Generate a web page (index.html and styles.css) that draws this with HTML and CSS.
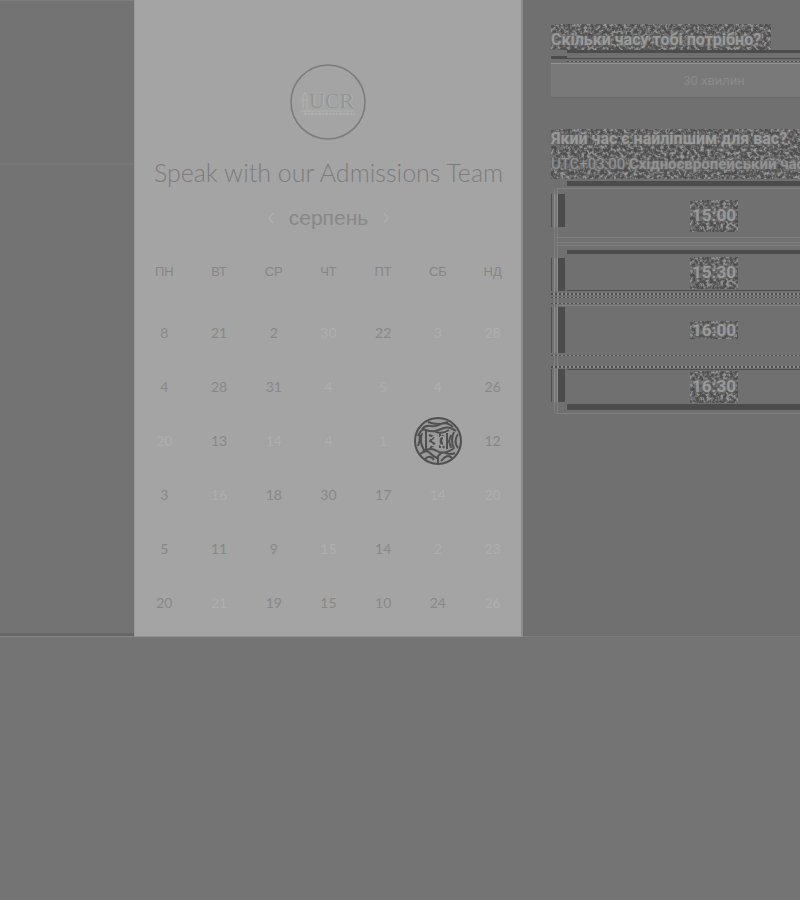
FILE: index.html
```html
<!DOCTYPE html>
<html lang="uk">
<head>
<meta charset="utf-8">
<meta name="viewport" content="width=device-width, initial-scale=1">
<title>Speak with our Admissions Team</title>
<link rel="stylesheet" href="styles.css">
</head>
<body>
<svg class="defs" aria-hidden="true">
  <filter id="grain" x="0" y="0" width="100%" height="100%" color-interpolation-filters="sRGB">
    <feTurbulence type="fractalNoise" baseFrequency="0.3" numOctaves="2" seed="7"/>
    <feColorMatrix values="1 0 0 0 0  1 0 0 0 0  1 0 0 0 0  0 0 0 0 1"/>
    <feComponentTransfer>
      <feFuncR type="discrete" tableValues="0.31 0.31 0.31 0.35 0.44 0.55 0.6 0.6"/>
      <feFuncG type="discrete" tableValues="0.31 0.31 0.31 0.35 0.44 0.55 0.6 0.6"/>
      <feFuncB type="discrete" tableValues="0.31 0.31 0.31 0.35 0.44 0.55 0.6 0.6"/>
    </feComponentTransfer>
  </filter>
</svg>
<main class="scheduler">
  <div class="gutter"></div>
  <section class="card">
    <svg class="logo" viewBox="0 0 78 78" role="img" aria-label="UCR">
      <circle cx="38" cy="39" r="37" fill="none" stroke="#7c7c7c" stroke-width="1.6"/>
      <g fill="none" stroke="#b0b0b0"><path d="M13 46V34l2-5 2 5v12M11 48h9M12 37h6"/><path d="M15 48h49" stroke="#afafaf"/></g>
      <text class="logo-shade" x="20" y="45">UCR</text>
      <text class="logo-text" x="19" y="45">UCR</text>
      <path d="M14 51h51" stroke="#b3b3b3" stroke-width="1.5" stroke-dasharray="3 1 2 1"/>
    </svg>
    <h1>Speak with our Admissions Team</h1>
    <div class="month">
      <button type="button" aria-label="Попередній місяць"><svg viewBox="0 0 8 12"><path d="M6 1 2 6l4 5"/></svg></button>
      <h2>серпень</h2>
      <button type="button" aria-label="Наступний місяць"><svg viewBox="0 0 8 12"><path d="m2 1 4 5-4 5"/></svg></button>
    </div>
    <table>
      <thead><tr><th>ПН</th><th>ВТ</th><th>СР</th><th>ЧТ</th><th>ПТ</th><th>СБ</th><th>НД</th></tr></thead>
      <tbody>
        <tr><td><button type="button">8</button></td><td><button type="button">21</button></td><td><button type="button">2</button></td><td class="off"><button type="button">30</button></td><td><button type="button">22</button></td><td class="off"><button type="button">3</button></td><td class="off"><button type="button">28</button></td></tr>
        <tr><td><button type="button">4</button></td><td><button type="button">28</button></td><td><button type="button">31</button></td><td class="off"><button type="button">4</button></td><td class="off"><button type="button">5</button></td><td class="off"><button type="button">4</button></td><td><button type="button">26</button></td></tr>
        <tr><td class="off"><button type="button">20</button></td><td><button type="button">13</button></td><td class="off"><button type="button">14</button></td><td class="off"><button type="button">4</button></td><td class="off"><button type="button">1</button></td><td><button type="button" class="selected">
          <svg viewBox="0 0 48 48" aria-hidden="true"><circle cx="24" cy="24" r="23" fill="#999" stroke="#505050" stroke-width="2"/><g fill="none" stroke="#505050" stroke-width="2" stroke-linejoin="round"><path d="M8 12q4-4 9-3t10-2 12 3M14 5q10 4 20 0M4 19q3-8 8-6t9 1 9-3 12 3M4 29q3-8 1-12M8 16q-3 9 2 17M12 14v18M44 17q-5 8 0 14M40 15q-4 8 0 17M6 37q6-5 10-1t7 5q4-7 9-5t9 0M11 42q5-5 9 1M27 44q6-8 11-3M9 34q8-4 14 0t16-2M24 39v7M15 18l5 2-4 4 5 3-5 4M26 16v15M29 18l-2 6 3 7M33 16v16M37 18l-2 6 2 7M20 14q7 4 15-1"/></g></svg>
          <span>30</span></button></td><td><button type="button">12</button></td></tr>
        <tr><td><button type="button">3</button></td><td class="off"><button type="button">16</button></td><td><button type="button">18</button></td><td><button type="button">30</button></td><td><button type="button">17</button></td><td class="off"><button type="button">14</button></td><td class="off"><button type="button">20</button></td></tr>
        <tr><td><button type="button">5</button></td><td><button type="button">11</button></td><td><button type="button">9</button></td><td class="off"><button type="button">15</button></td><td><button type="button">14</button></td><td class="off"><button type="button">2</button></td><td class="off"><button type="button">23</button></td></tr>
        <tr><td><button type="button">20</button></td><td class="off"><button type="button">21</button></td><td><button type="button">19</button></td><td><button type="button">15</button></td><td><button type="button">10</button></td><td><button type="button">24</button></td><td class="off"><button type="button">26</button></td></tr>
      </tbody>
    </table>
  </section>
  <section class="panel">
    <div class="booking">
      <h3 class="noisy question"><svg class="grain" aria-hidden="true"><rect width="100%" height="100%" filter="url(#grain)"/></svg><span>Скільки часу тобі потрібно?</span></h3>
      <div class="rule"></div>
      <button type="button" class="duration">30 хвилин</button>
      <div class="noisy when"><svg class="grain" aria-hidden="true"><rect width="100%" height="100%" filter="url(#grain)"/></svg>
        <h3>Який час є найліпшим для вас?</h3>
        <p><span>UTC+03:00</span> Східноєвропейський час</p>
      </div>
      <div class="band"></div>
      <div class="slots">
        <button type="button"><span class="noisy time"><svg class="grain" aria-hidden="true"><rect width="100%" height="100%" filter="url(#grain)"/></svg><span>15:00</span></span></button>
        <button type="button"><span class="noisy time"><svg class="grain" aria-hidden="true"><rect width="100%" height="100%" filter="url(#grain)"/></svg><span>15:30</span></span></button>
        <button type="button"><span class="noisy time short"><svg class="grain" aria-hidden="true"><rect width="100%" height="100%" filter="url(#grain)"/></svg><span>16:00</span></span></button>
        <button type="button"><span class="noisy time"><svg class="grain" aria-hidden="true"><rect width="100%" height="100%" filter="url(#grain)"/></svg><span>16:30</span></span></button>
      </div>
    </div>
  </section>
</main>
</body>
</html>
```
FILE: styles.css
```css
* { box-sizing: border-box; }
body { margin: 0; background: #747474; font-family: "Liberation Sans", Arial, sans-serif; overflow-x: hidden; }
h1, h2, h3, p { margin: 0; }
button { border: 0; padding: 0; background: none; font: inherit; color: inherit; }
.defs { position: absolute; width: 0; height: 0; }

.scheduler { display: grid; grid-template-columns: minmax(0, 134fr) 389px minmax(0, 277fr); }
.gutter {
  border-top: 1px solid #7e7e7e;
  background:
    linear-gradient(#666, #666) 0 100% / 100% 3px no-repeat,
    linear-gradient(#787878, #787878) 0 162px / 100% 2px no-repeat,
    #737373;
  border-bottom: 1px solid #868686;
  box-shadow: 0 3px 0 #696969;
}
.card {
  background: #a4a4a4;
  border-left: 1px solid #989898;
  border-right: 2px solid #8c8c8c;
  border-bottom: 1px solid #929292;
  padding: 63px 1px 6px 2px;
  display: flex;
  flex-direction: column;
  align-items: center;
}
.logo { width: 78px; height: 78px; display: block; }
.logo text { font-family: "Liberation Serif", serif; font-size: 22px; }
.logo-shade { fill: #b4b4b4; }
.logo-text { fill: #959595; }
h1 { margin-top: 15px; font: 300 25px/32px Lato, sans-serif; color: #7c7c7c; white-space: nowrap; }
.month { display: flex; align-items: center; gap: 14px; margin-top: 18px; height: 24px; }
.month h2 { font: 400 21px/24px "Liberation Sans", sans-serif; color: #888; }
.month button { width: 8px; height: 12px; }
.month svg { display: block; width: 8px; height: 12px; fill: none; stroke: #b6b6b6; stroke-width: 1; }
table { width: 100%; margin-top: 13px; border-collapse: collapse; table-layout: fixed; }
th, td { padding: 0; text-align: center; }
th { height: 63px; padding-bottom: 5px; font: 400 13px/16px "Liberation Sans", sans-serif; color: #868686; }
td { height: 54px; font: 400 14px/16px Lato, sans-serif; color: #888; }
td button { width: 48px; height: 48px; border-radius: 50%; vertical-align: middle; }
.off { color: #afafaf; }
.selected { position: relative; color: #a5a5a5; }
.selected svg { position: absolute; inset: 0; width: 48px; height: 48px; }
.selected span { position: relative; }

.panel { background: #707070; border-bottom: 1px solid #7a7a7a; overflow: hidden; padding: 24px 0 0 28px; }
.booking { width: 326px; }
.noisy { position: relative; }
.noisy > :not(.grain) { position: relative; text-shadow: 0 0 2px #6c6c6c, 0 0 2px #6c6c6c, 0 0 3px #6c6c6c; }
.grain { position: absolute; inset: 0; width: 100%; height: 100%; }
h3 { font: 700 16px/20px Roboto, sans-serif; white-space: nowrap; color: #999; }
.question { width: 220px; height: 26px; padding-top: 6px; }
.rule {
  height: 14px;
  background:
    linear-gradient(#4c4c4c, #4c4c4c) 16px 0 / 100% 3px no-repeat,
    linear-gradient(#4c4c4c, #4c4c4c) 0 6px / 16px 3px no-repeat,
    linear-gradient(#4c4c4c, #4c4c4c) 0 8px / 100% 1px no-repeat,
    repeating-linear-gradient(90deg, #4c4c4c 0 2px, #8a8a8a 2px 4px) 16px 11px / 100% 1px no-repeat,
    linear-gradient(#929292, #929292) 0 13px / 100% 1px no-repeat;
}
.duration { display: block; width: 100%; height: 34px; background: #797979; border-bottom: 1px solid #696969; color: #8a8a8a; font: 400 13px/16px Roboto, sans-serif; }
.when { margin-top: 31px; height: 50px; }
.when p { font: 700 15px/20px Roboto, sans-serif; padding-top: 5px; color: #929292; white-space: nowrap; }
.when p span { font-weight: 400; }
.band { height: 8px; background: linear-gradient(#4c4c4c, #4c4c4c) 16px 2px / 100% 5px no-repeat; }
.slots { display: flex; flex-direction: column; background: linear-gradient(90deg, #808080 0 1px, #707070 1px 3px, #808080 3px 4px) 3px 2px / 4px 224px no-repeat; }
.slots button {
  height: 57px;
  width: 100%;
  display: flex;
  align-items: center;
  justify-content: center;
  --dark: linear-gradient(#4c4c4c, #4c4c4c);
  --light: linear-gradient(#808080, #808080);
  --dots: repeating-linear-gradient(90deg, #4c4c4c 0 2px, #8d8d8d 2px 4px);
  --side: linear-gradient(90deg, #505050 0 1px, #707070 1px 3px, #8d8d8d 3px 4px, #777 4px 6px, #8d8d8d 6px 7px, #4c4c4c 7px 14px);
  background-repeat: no-repeat;
}
.slots button:nth-child(1) {
  background-image: var(--side), var(--light), var(--light), var(--light);
  background-size: 14px 33px, 100% 1px, 100% 1px, 100% 1px;
  background-position: 0 7px, 5px 1px, 5px 50px, 5px 55px;
}
.slots button:nth-child(2) {
  background-image: var(--side), var(--light), var(--dark), var(--dark), var(--dots), var(--dots);
  background-size: 14px 33px, 100% 1px, 100% 4px, 100% 1px, 100% 2px, 100% 1px;
  background-position: 0 14px, 5px 1px, 16px 6px, 16px 46px, 0 49px, 0 53px;
}
.slots button:nth-child(3) {
  background-image: var(--side), var(--dots), var(--light), var(--dots);
  background-size: 14px 46px, 100% 1px, 100% 1px, 100% 1px;
  background-position: 0 6px, 0 2px, 5px 4px, 0 54px;
}
.slots button:nth-child(4) {
  background-image: var(--side), var(--dots), var(--dark), var(--dark), var(--light);
  background-size: 14px 33px, 100% 2px, 100% 1px, 100% 6px, 100% 1px;
  background-position: 0 11px, 0 8px, 16px 11px, 16px 46px, 5px 55px;
}
.time { display: block; width: 48px; height: 32px; padding-top: 6px; font: 700 17px/18px Roboto, sans-serif; color: #999; }
.time.short { height: 18px; padding-top: 0; }
```
